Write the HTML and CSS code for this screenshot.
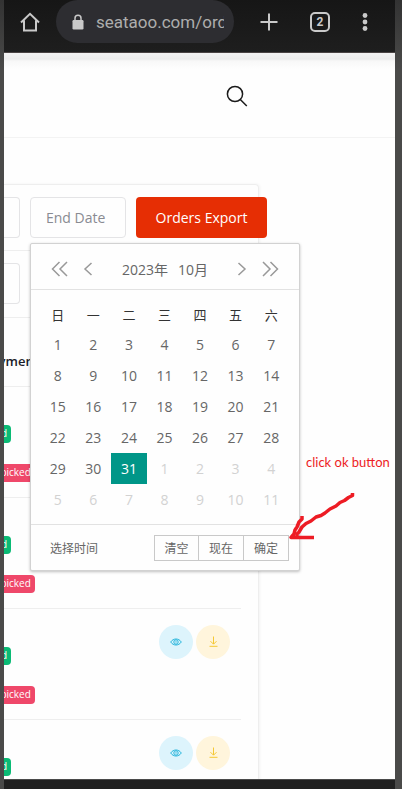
FILE: index.html
```html
<!DOCTYPE html>
<html lang="en">
<head>
<meta charset="utf-8">
<meta name="viewport" content="width=device-width, initial-scale=1">
<title>Orders</title>
<link rel="stylesheet" href="styles.css">
</head>
<body>
<header class="browser-bar">
  <button class="bar-btn" aria-label="Home">
    <svg width="20" height="20" viewBox="0 0 20 20" fill="none" stroke="#c9c9c9" stroke-width="2"><path d="M1 10.5 10 1.8l9 8.7M4 8.5v10h12v-10"/></svg>
  </button>
  <label class="address">
    <svg width="12" height="16" viewBox="0 0 12 16"><rect x="0.5" y="6" width="11" height="9.5" rx="1.2" fill="#c9c9c9"/><path d="M3 6.5V4.3a3 3 0 0 1 6 0v2.200" fill="none" stroke="#c9c9c9" stroke-width="1.500"/></svg>
    <input class="address-input" type="text" aria-label="Address" value="seataoo.com/orders">
  </label>
  <div class="bar-actions">
    <button class="bar-btn" aria-label="New tab">
      <svg width="18" height="18" viewBox="0 0 18 18" stroke="#c9c9c9" stroke-width="2"><path d="M9 0.500v17M0.500 9h17"/></svg>
    </button>
    <button class="bar-btn tab-count" aria-label="Tabs">2</button>
    <button class="bar-btn" aria-label="Menu">
      <svg width="6" height="18" viewBox="0 0 6 18" fill="#c9c9c9"><circle cx="3" cy="2.500" r="2.400"/><circle cx="3" cy="9" r="2.400"/><circle cx="3" cy="15.500" r="2.400"/></svg>
    </button>
  </div>
</header>

<main class="page">
  <div class="site-header">
    <button class="search-btn" aria-label="Search">
      <svg width="22" height="22" viewBox="0 0 22 22" fill="none" stroke="#1b1b1b" stroke-width="1.500"><circle cx="9" cy="9" r="7.600"/><path d="m14.300 14.500 6.500 6.500"/></svg>
    </button>
  </div>

  <section class="card">
    <div class="filters">
      <input class="field field-cut" type="text" aria-label="Start date">
      <div class="date-field">
        <input class="field" type="text" placeholder="End Date" aria-label="End date">
        <div class="picker">
          <div class="picker-head">
            <button class="nav" aria-label="Previous year"><svg width="18" height="16" viewBox="0 0 18 16"><path d="M8.500 1 1.500 8l7 7M16 1 9 8l7 7"/></svg></button>
            <button class="nav" aria-label="Previous month"><svg width="10" height="16" viewBox="0 0 10 16"><path d="M8.500 2 2 8l6.500 6"/></svg></button>
            <div class="picker-title"><span>2023年</span><span>10月</span></div>
            <button class="nav" aria-label="Next month"><svg width="10" height="16" viewBox="0 0 10 16"><path d="M1.500 2 8 8l-6.500 6"/></svg></button>
            <button class="nav" aria-label="Next year"><svg width="18" height="16" viewBox="0 0 18 16"><path d="m2 1 7 7-7 7M9.500 1l7 7-7 7"/></svg></button>
          </div>
          <div class="picker-body">
            <table class="days">
              <thead><tr><th>日</th><th>一</th><th>二</th><th>三</th><th>四</th><th>五</th><th>六</th></tr></thead>
              <tbody>
                <tr><td>1</td><td>2</td><td>3</td><td>4</td><td>5</td><td>6</td><td>7</td></tr>
                <tr><td>8</td><td>9</td><td>10</td><td>11</td><td>12</td><td>13</td><td>14</td></tr>
                <tr><td>15</td><td>16</td><td>17</td><td>18</td><td>19</td><td>20</td><td>21</td></tr>
                <tr><td>22</td><td>23</td><td>24</td><td>25</td><td>26</td><td>27</td><td>28</td></tr>
                <tr><td>29</td><td>30</td><td class="selected">31</td><td class="next">1</td><td class="next">2</td><td class="next">3</td><td class="next">4</td></tr>
                <tr><td class="next">5</td><td class="next">6</td><td class="next">7</td><td class="next">8</td><td class="next">9</td><td class="next">10</td><td class="next">11</td></tr>
              </tbody>
            </table>
          </div>
          <div class="picker-foot">
            <span>选择时间</span>
            <div class="foot-btns"><button>清空</button><button>现在</button><button>确定</button></div>
          </div>
          <div class="note">click ok button</div>
          <svg class="arrow" width="68" height="52" viewBox="0 0 68 52" fill="none" stroke="#ed1c24" stroke-width="3.500" stroke-linejoin="round"><path d="M64.500 2v2.500l-4 2-4 3-4.500 2-4 3.500-6 3-5 4-4 2.500-5 1.500-5 4-5 2.500-4 3.500-3 5-2 2v3"/><path d="M14 25v3l-3 3-2 5-2 3-1 4-3 3.500h23"/></svg>
        </div>
      </div>
      <button class="export">Orders Export</button>
    </div>
    <div class="filters second">
      <input class="field field-cut" type="text" aria-label="Search orders">
    </div>
    <div class="table-wrap">
      <table class="orders">
        <thead><tr><th>Payment</th><th></th></tr></thead>
        <tbody>
          <tr><td><span class="badge paid">Paid</span><span class="badge unpicked">Unpicked</span></td><td></td></tr>
          <tr><td><span class="badge paid">Paid</span><span class="badge unpicked">Unpicked</span></td><td></td></tr>
          <tr>
            <td><span class="badge paid">Paid</span><span class="badge unpicked">Unpicked</span></td>
            <td><div class="actions">
              <a class="round view" href="#" aria-label="View"><svg width="12" height="8" viewBox="0 0 12 8"><path d="M0.700 4C3.300 0 8.700 0 11.300 4 8.700 8 3.300 8 0.700 4z"/><circle cx="6" cy="4" r="2.200"/><path d="M6 3.200v1.400"/></svg></a>
              <a class="round load" href="#" aria-label="Download"><svg width="9" height="11" viewBox="0 0 9 11"><path d="M4.500 0.500v7.500M1.500 5.200l3 3 3-3M0.500 10.300h8"/></svg></a>
            </div></td>
          </tr>
          <tr>
            <td><span class="badge paid">Paid</span><span class="badge unpicked">Unpicked</span></td>
            <td><div class="actions">
              <a class="round view" href="#" aria-label="View"><svg width="12" height="8" viewBox="0 0 12 8"><path d="M0.700 4C3.300 0 8.700 0 11.300 4 8.700 8 3.300 8 0.700 4z"/><circle cx="6" cy="4" r="2.200"/><path d="M6 3.200v1.400"/></svg></a>
              <a class="round load" href="#" aria-label="Download"><svg width="9" height="11" viewBox="0 0 9 11"><path d="M4.500 0.500v7.500M1.500 5.200l3 3 3-3M0.500 10.300h8"/></svg></a>
            </div></td>
          </tr>
        </tbody>
      </table>
    </div>
  </section>
</main>
<footer class="system-bar"></footer>
</body>
</html>
```
FILE: styles.css
```css
* { box-sizing: border-box; }

body {
  margin: 0;
  height: 100vh;
  padding: 0 7px 0 4px;
  display: flex;
  flex-direction: column;
  overflow: hidden;
  background: linear-gradient(#333, #4a4a49 70px);
  font-family: "Open Sans", "Noto Sans CJK SC", sans-serif;
  font-size: 14px;
  color: #666;
}

button {
  margin: 0;
  padding: 0;
  border: 0;
  background: none;
  font: inherit;
  color: inherit;
}

svg { display: block; }

/* browser chrome */
.browser-bar {
  flex: none;
  display: flex;
  align-items: center;
  height: 53px;
  padding: 0 27px 9px 16px;
  background: linear-gradient(#161616, #1e1e1e);
  border-bottom: 1px solid #4a4444;
}

.address {
  flex: 1;
  min-width: 0;
  display: flex;
  align-items: center;
  gap: 12px;
  height: 43px;
  margin: 0 26px 0 16px;
  padding: 0 10px 0 16px;
  border-radius: 22px;
  background: #2d2d31;
}

.address svg { flex: none; }

.address-input {
  flex: 1;
  min-width: 0;
  padding: 0;
  border: 0;
  background: none;
  font: 17px Roboto, sans-serif;
  color: #adadad;
}

.bar-actions {
  display: flex;
  align-items: center;
  gap: 32px;
}

.tab-count {
  width: 20px;
  height: 20px;
  border: 2px solid #c9c9c9;
  border-radius: 5px;
  font: bold 12px/16px Roboto, sans-serif;
  color: #c9c9c9;
}

.system-bar {
  flex: none;
  height: 10px;
  background: #202020;
  border-top: 1px solid #4a4a4a;
}

/* page */
.page {
  flex: 1;
  min-height: 0;
  overflow: hidden;
  background: #fefefe;
}

.site-header {
  display: flex;
  align-items: center;
  justify-content: flex-end;
  height: 85px;
  padding: 2px 147px 0 0;
  border-bottom: 1px solid #f3f3f3;
  background: linear-gradient(#f3f3f3, #ececec 6px, #f8f8f8 8px, #fefefe 16px);
}

.card {
  margin: 46px 136px 0 0;
  border: 1px solid #eee;
  border-left: 0;
  border-radius: 0 4px 0 0;
  box-shadow: 1px 0 3px #f3f3f3;
}

.filters {
  display: flex;
  gap: 10px;
  height: 66px;
  padding-top: 12px;
  border-bottom: 1px solid #eee;
}

.second { height: 67px; }

.field {
  display: block;
  width: 96px;
  height: 41px;
  padding: 0 15px;
  border: 1px solid #e4e4e6;
  border-radius: 4px;
  background: #fefefe;
  font: inherit;
  color: #898b92;
}

.field::placeholder { color: #898b92; }

.field-cut {
  width: 16px;
  padding: 0;
  border-left: 0;
  border-radius: 0 4px 4px 0;
}

.export {
  flex: none;
  width: 131px;
  height: 41px;
  border-radius: 4px;
  background: #e62e04;
  color: #fff;
}

/* date picker */
.date-field { position: relative; }

.picker {
  position: absolute;
  top: 46px;
  left: 0;
  z-index: 2;
  width: 270px;
  border: 1px solid #d2d2d2;
  border-radius: 2px;
  background: #fefefe;
  box-shadow: 0 1px 3px rgba(0, 0, 0, 0.25);
}

.picker-head {
  display: flex;
  align-items: center;
  gap: 14px;
  height: 46px;
  padding: 4px 20px 0;
  border-bottom: 1px solid #e2e2e2;
}

.nav svg {
  fill: none;
  stroke: #999;
  stroke-width: 1.500;
}

.picker-title {
  flex: 1;
  display: flex;
  justify-content: center;
  gap: 10px;
}

.picker-body { padding: 10px 10px 9px 9px; }

.days {
  width: 100%;
  height: 215px;
  table-layout: fixed;
  border-collapse: collapse;
}

.days th,
.days td {
  height: 30px;
  padding: 0;
  text-align: center;
  font-weight: 400;
  line-height: 20px;
}

.days th {
  font-size: 13px;
  color: #333;
}

.days .next { color: #d2d2d2; }

.days .selected {
  background: #009688;
  color: #fff;
}

.picker-foot {
  display: flex;
  align-items: center;
  justify-content: space-between;
  height: 46px;
  padding: 0 10px 0 19px;
  border-top: 1px solid #e2e2e2;
  font-size: 12px;
}

.foot-btns { display: flex; }

.foot-btns button {
  width: 45px;
  height: 26px;
  border: 1px solid #c9c9c9;
}

.foot-btns button + button { border-left: 0; }

.note {
  position: absolute;
  top: 209px;
  left: 275px;
  white-space: nowrap;
  font: 13px/18px Lato, sans-serif;
  color: #ed1c24;
}

.arrow {
  position: absolute;
  top: 247px;
  left: 257px;
}

/* orders */
.table-wrap { overflow: hidden; }

.orders {
  width: calc(100% + 4px);
  margin-left: -21px;
  border-collapse: collapse;
}

.orders tr {
  height: 111px;
  border-bottom: 1px solid #eee;
}

.orders thead tr { height: 68px; }

.orders th,
.orders td {
  padding: 0;
  text-align: left;
}

.orders th {
  padding-top: 18px;
  font-size: 13px;
  color: #1b1b28;
  font-weight: 600;
}

.orders td { vertical-align: top; }

.orders td:first-child { padding-top: 38px; }

.badge {
  display: block;
  width: max-content;
  height: 18px;
  padding: 0 4px;
  border-radius: 4px;
  font-size: 10px;
  line-height: 17px;
  color: #fff;
}

.badge + .badge { margin-top: 21px; }

.paid { background: #0abb75; }
.unpicked { background: #ef486a; }

.actions {
  display: flex;
  justify-content: flex-end;
  gap: 3px;
  padding: 16px 11px 0 0;
}

.round {
  display: grid;
  place-items: center;
  width: 34px;
  height: 34px;
  border-radius: 50%;
}

.round svg {
  fill: none;
  stroke: currentColor;
}

.view {
  background: #ddf4fc;
  color: #25b5dc;
}

.load {
  background: #fff5dc;
  color: #f5c834;
}
```
